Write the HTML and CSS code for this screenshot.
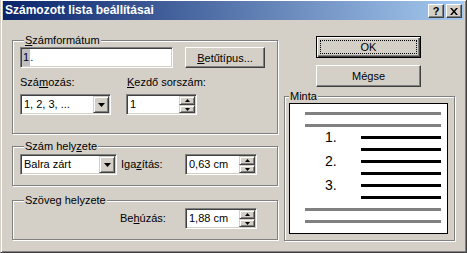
FILE: index.html
```html
<!DOCTYPE html>
<html lang="hu">

<head>
    <meta charset="UTF-8">
    <title>Számozott lista beállításai</title>
    <link rel="stylesheet" href="styles.css">
</head>

<body>
    <div class="window">
        <!-- Címsor -->
        <div class="titlebar">
            <div class="title">Számozott lista beállításai</div>
            <div class="cap-btn help">?</div>
            <div class="cap-btn close">
                <svg width="8" height="7" viewBox="0 0 8 7"><path d="M0 0h2l2 2.5L6 0h2L5 3.5 8 7H6L4 4.5 2 7H0l3-3.5z" fill="#000"/></svg>
            </div>
        </div>

        <div class="dialog-body">
            <div class="left">
                <!-- Számformátum -->
                <div class="group format">
                    <div class="group-title"><u>S</u>zámformátum</div>
                    <div class="row">
                        <div class="field text-box"><span class="sel">1</span>.</div>
                        <button class="btn font-btn"><u>B</u>etűtípus...</button>
                    </div>
                    <div class="num-grid">
                        <div class="label">Szá<u>m</u>ozás:</div>
                        <div class="label kezdo"><u>K</u>ezdő sorszám:</div>
                        <div class="field combo style-combo">
                            <span class="value">1, 2, 3, ...</span>
                            <span class="drop"><svg width="7" height="4" viewBox="0 0 7 4"><path d="M0 0h7L3.5 4z" fill="#000"/></svg></span>
                        </div>
                        <div class="field spin start-spin">
                            <span class="value">1</span>
                            <span class="spin-btns">
                                <span class="up"><svg width="5" height="3" viewBox="0 0 5 3"><path d="M2.5 0L5 3H0z" fill="#000"/></svg></span>
                                <span class="down"><svg width="5" height="3" viewBox="0 0 5 3"><path d="M0 0h5L2.5 3z" fill="#000"/></svg></span>
                            </span>
                        </div>
                    </div>
                </div>

                <!-- Szám helyzete -->
                <div class="group position">
                    <div class="group-title">Szám hely<u>z</u>ete</div>
                    <div class="pos-row">
                        <div class="field combo align-combo">
                            <span class="value">Balra zárt</span>
                            <span class="drop"><svg width="7" height="4" viewBox="0 0 7 4"><path d="M0 0h7L3.5 4z" fill="#000"/></svg></span>
                        </div>
                        <div class="label side">Iga<u>z</u>ítás:</div>
                        <div class="field spin cm-spin">
                            <span class="value">0,63 cm</span>
                            <span class="spin-btns">
                                <span class="up"><svg width="5" height="3" viewBox="0 0 5 3"><path d="M2.5 0L5 3H0z" fill="#000"/></svg></span>
                                <span class="down"><svg width="5" height="3" viewBox="0 0 5 3"><path d="M0 0h5L2.5 3z" fill="#000"/></svg></span>
                            </span>
                        </div>
                    </div>
                </div>

                <!-- Szöveg helyzete -->
                <div class="group text-pos">
                    <div class="group-title">Szöveg helyzete</div>
                    <div class="indent-row">
                        <div class="label side">Be<u>h</u>úzás:</div>
                        <div class="field spin cm-spin">
                            <span class="value">1,88 cm</span>
                            <span class="spin-btns">
                                <span class="up"><svg width="5" height="3" viewBox="0 0 5 3"><path d="M2.5 0L5 3H0z" fill="#000"/></svg></span>
                                <span class="down"><svg width="5" height="3" viewBox="0 0 5 3"><path d="M0 0h5L2.5 3z" fill="#000"/></svg></span>
                            </span>
                        </div>
                    </div>
                </div>
            </div>

            <div class="right">
                <button class="btn ok-btn"><span class="focus">OK</span></button>
                <button class="btn cancel-btn">Mégse</button>

                <!-- Minta -->
                <div class="group sample">
                    <div class="group-title">Minta</div>
                    <div class="preview">
                        <div class="line gray"></div>
                        <div class="line gray"></div>
                        <div class="item"><span class="num">1.</span><span class="bar"></span></div>
                        <div class="item"><span class="num"></span><span class="bar"></span></div>
                        <div class="item"><span class="num">2.</span><span class="bar"></span></div>
                        <div class="item"><span class="num"></span><span class="bar"></span></div>
                        <div class="item"><span class="num">3.</span><span class="bar"></span></div>
                        <div class="item"><span class="num"></span><span class="bar"></span></div>
                        <div class="line gray"></div>
                        <div class="line gray"></div>
                    </div>
                </div>
            </div>
        </div>
    </div>
</body>

</html>
```

FILE: styles.css
```css
/* Klasszikus Windows párbeszédablak */

* {
    box-sizing: border-box;
}

body {
    margin: 0;
    font-family: "Liberation Sans", Arial, sans-serif;
    font-size: 11px;
    color: #000;
}

u {
    text-decoration: underline;
    text-underline-offset: 1px;
}

.window {
    width: 467px;
    height: 253px;
    background: #d4d0c8;
    border: 1px solid;
    border-top: 0;
    border-color: #d4d0c8 #404040 #404040 #d4d0c8;
    box-shadow: inset 1px 1px #fff, inset -1px -1px #808080;
    padding: 1px 2px 0 2px;
}

/* Címsor */

.titlebar {
    height: 19px;
    display: flex;
    align-items: flex-start;
    padding-left: 2px;
    background: linear-gradient(to right, #0a246a, #a6caf0);
    color: #fff;
    font-weight: bold;
    font-size: 12px;
}

.title {
    flex: 1;
    line-height: 19px;
}

.cap-btn {
    width: 16px;
    height: 14px;
    margin: 3px 2px 0 0;
    display: flex;
    align-items: center;
    justify-content: center;
    background: #d4d0c8;
    border: 1px solid;
    border-color: #fff #404040 #404040 #fff;
    box-shadow: inset -1px -1px #808080;
    color: #000;
    font-size: 11px;
    line-height: 12px;
}

/* Tartalom */

.dialog-body {
    display: flex;
    gap: 6px;
    padding-left: 9px;
}

.left {
    width: 266px;
}

.right {
    width: 171px;
}

.group {
    border: 1px solid #808080;
    box-shadow: inset 1px 1px #fff, 1px 1px #fff;
}

.group-title {
    width: fit-content;
    margin: -7px 0 0 4px;
    padding: 0 1px;
    background: #d4d0c8;
    line-height: 13px;
}

.format {
    margin-top: 20px;
    height: 94px;
    padding-left: 7px;
}

.position {
    margin-top: 12px;
    height: 40px;
    padding-left: 7px;
}

.text-pos {
    margin-top: 14px;
    height: 40px;
    padding-left: 7px;
}

.row {
    display: flex;
    gap: 12px;
}

.label {
    line-height: 13px;
    white-space: nowrap;
}

.kezdo {
    padding-left: 1px;
}

/* Mezők */

.field {
    height: 21px;
    display: flex;
    align-items: center;
    padding: 1px;
    background: #fff;
    border: 1px solid;
    border-color: #808080 #fff #fff #808080;
    box-shadow: inset 1px 1px #404040, inset -1px -1px #d4d0c8;
    line-height: 17px;
    white-space: nowrap;
}

.text-box {
    width: 153px;
}

.sel {
    display: inline-block;
    padding: 0 1px;
    background: #c0c0c0;
}

.value {
    flex: 1;
    padding-left: 2px;
}

.num-grid {
    display: grid;
    grid-template-columns: 106px 71px;
    row-gap: 5px;
    margin-top: 8px;
}

.style-combo {
    width: 91px;
}

.align-combo {
    width: 97px;
}

.start-spin {
    width: 71px;
}

.cm-spin {
    width: 72px;
}

.drop {
    width: 16px;
    height: 17px;
    display: flex;
    align-items: center;
    justify-content: center;
    background: #d4d0c8;
    border: 1px solid;
    border-color: #d4d0c8 #404040 #404040 #d4d0c8;
    box-shadow: inset 1px 1px #fff, inset -1px -1px #808080;
}

.spin-btns {
    width: 16px;
    height: 17px;
    display: flex;
    flex-direction: column;
}

.spin-btns span {
    display: flex;
    align-items: center;
    justify-content: center;
    background: #d4d0c8;
    border: 1px solid;
    border-color: #d4d0c8 #404040 #404040 #d4d0c8;
    box-shadow: inset 1px 1px #fff, inset -1px -1px #808080;
}

.spin-btns .up {
    height: 9px;
}

.spin-btns .down {
    height: 8px;
}

.pos-row {
    display: flex;
    align-items: center;
    margin-top: 1px;
}

.pos-row .side {
    width: 68px;
    padding-left: 4px;
}

.indent-row {
    display: flex;
    align-items: center;
    margin-top: 1px;
    padding-left: 100px;
}

.indent-row .side {
    width: 65px;
}

/* Gombok */

.btn {
    display: block;
    margin: 0;
    padding: 0;
    font: inherit;
    color: #000;
    background: #d4d0c8;
    border: 1px solid;
    border-color: #fff #404040 #404040 #fff;
    box-shadow: inset -1px -1px #808080;
}

.font-btn {
    width: 80px;
    height: 21px;
}

.ok-btn,
.cancel-btn {
    width: 105px;
    height: 22px;
    margin-left: 32px;
}

.ok-btn {
    margin-top: 16px;
    border: 1px solid #000;
    box-shadow: inset 1px 1px #fff, inset -1px -1px #404040, inset -2px -2px #808080;
}

.focus {
    display: flex;
    align-items: center;
    justify-content: center;
    height: 14px;
    margin: 3px;
    border: 1px dotted #000;
}

.cancel-btn {
    margin-top: 7px;
}

/* Minta */

.sample {
    margin-top: 9px;
    height: 145px;
}

.preview {
    width: 159px;
    height: 131px;
    margin-left: 4px;
    padding: 8px 0 0 15px;
    display: flex;
    flex-direction: column;
    gap: 9px;
    background: #fff;
    border: 1px solid #000;
}

.line {
    width: 136px;
    height: 3px;
}

.gray {
    background: #808080;
}

.item {
    display: flex;
    align-items: center;
    height: 3px;
}

.num {
    width: 56px;
    padding-left: 20px;
    font-size: 14px;
    line-height: 3px;
}

.bar {
    width: 80px;
    height: 3px;
    background: #000;
}
```
